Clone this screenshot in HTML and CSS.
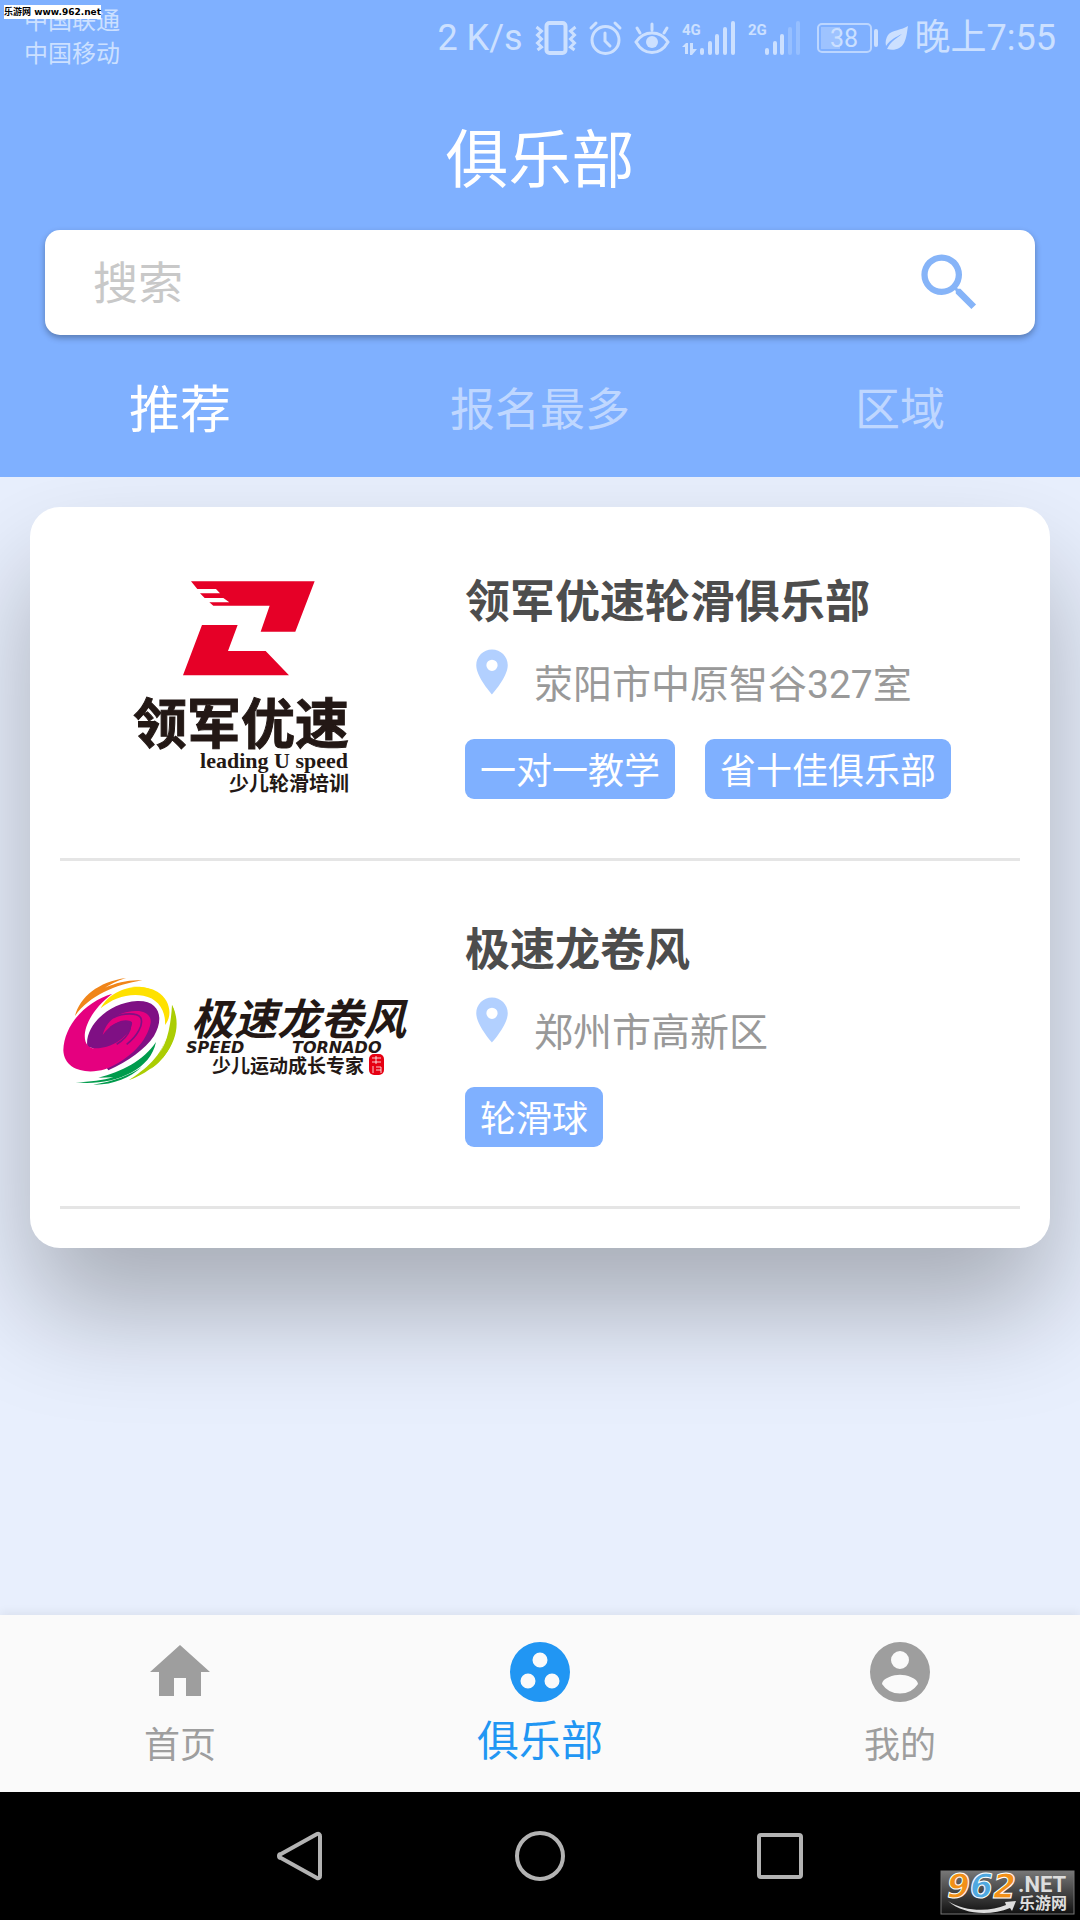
FILE: index.html
```html
<!DOCTYPE html>
<html lang="zh-CN">
<head>
  <meta charset="UTF-8">
  <meta name="viewport" content="width=device-width, initial-scale=1.0">
  <title>俱乐部</title>
  <link rel="stylesheet" href="styles.css">
</head>
<body>

<div class="site-mark">乐游网 www.962.net</div>

<header class="header">
  <div class="status-bar">
    <div class="carriers">
      <div>中国联通</div>
      <div>中国移动</div>
    </div>
    <div class="status-icons">
      <span>2 K/s</span>
      <!-- vibrate -->
      <svg width="42" height="34" viewBox="0 0 42 34" fill="none" stroke="currentColor">
        <rect x="11.500" y="2" width="19" height="30" rx="3" stroke-width="4"/>
        <path d="M1.500 6l5 4-4 4 4 4-4 4 4 4-4 3M40.500 6l-5 4 4 4-4 4 4 4-4 4 4 3" stroke-width="3"/>
      </svg>
      <!-- alarm -->
      <svg width="33" height="34" viewBox="0 0 33 34" fill="none" stroke="currentColor" stroke-width="3" stroke-linecap="round">
        <circle cx="16.500" cy="19" r="13.500"/>
        <path d="M16 12v8l5 5M2 7l5-5M31 7l-5-5"/>
      </svg>
      <!-- eye -->
      <svg width="36" height="34" viewBox="0 0 36 34" fill="none" stroke="currentColor" stroke-width="3" stroke-linecap="round">
        <path d="M2 21C10 9 26 9 34 21C26 35 10 35 2 21zM18 9V3M6 12L3 7M30 12l3-5"/>
        <circle cx="18" cy="21" r="6" fill="currentColor" stroke="none"/>
      </svg>
      <!-- signal, sim 1 -->
      <svg width="54" height="34" viewBox="0 0 54 34" fill="currentColor">
        <text class="net" x="0" y="14">4G</text>
        <path d="M0 26l4-4h2v11H3v-7zM8 22h3v6h4l-5 6H8z"/>
        <rect x="18" y="27" width="4" height="7" rx="2"/>
        <rect x="26" y="20" width="4" height="14" rx="2"/>
        <rect x="33" y="13" width="4" height="21" rx="2"/>
        <rect x="41" y="6" width="4" height="28" rx="2"/>
        <rect x="49" y="0" width="4" height="34" rx="2"/>
      </svg>
      <!-- signal, sim 2 -->
      <svg width="54" height="34" viewBox="0 0 54 34" fill="currentColor">
        <text class="net" x="0" y="14">2G</text>
        <rect x="17" y="27" width="4" height="7" rx="2"/>
        <rect x="25" y="20" width="4" height="14" rx="2"/>
        <rect x="32" y="13" width="4" height="21" rx="2"/>
        <rect x="40" y="6" width="4" height="28" rx="2" opacity=".3"/>
        <rect x="48" y="0" width="4" height="34" rx="2" opacity=".3"/>
      </svg>
      <div class="power">
        <svg width="62" height="30" viewBox="0 0 62 30" fill="currentColor">
          <rect x="1" y="1" width="53" height="28" rx="4" fill="none" stroke="currentColor" stroke-width="2" opacity=".8"/>
          <rect x="4" y="4" width="19" height="22" opacity=".4"/>
          <rect x="57" y="6" width="4" height="18" rx="2"/>
          <text class="level" x="27" y="24" text-anchor="middle">38</text>
        </svg>
        <!-- leaf -->
        <svg width="24" height="24" viewBox="0 0 24 24" fill="currentColor">
          <path d="M23 0C17 4 7 4 3 9C1 12 0 16 1 20C6 13 11 11 17 8C12 12 6 15 2 23C9 25 16 23 19 17C22 11 22 5 23 0z"/>
        </svg>
        <span>晚上7:55</span>
      </div>
    </div>
  </div>

  <h1 class="title">俱乐部</h1>

  <form class="search">
    <input class="search-input" type="text" placeholder="搜索" aria-label="搜索">
    <button class="search-button" type="button" aria-label="搜索">
      <svg width="75" height="75" viewBox="0 0 24 24" fill="currentColor">
        <path d="M15.500 14h-.79l-.28-.27A6.471 6.471 0 0 0 16 9.500 6.500 6.500 0 1 0 9.500 16c1.610 0 3.090-.59 4.230-1.570l.27.28v.79l5 4.990L20.490 19l-4.990-5zm-6 0C7.010 14 5 11.990 5 9.500S7.010 5 9.500 5 14 7.010 14 9.500 11.990 14 9.500 14z"/>
      </svg>
    </button>
  </form>

  <div class="tabs">
    <button class="tab active">推荐</button>
    <button class="tab">报名最多</button>
    <button class="tab">区域</button>
  </div>
</header>

<main class="content">
  <div class="card">
    <article class="club">
      <div class="club-logo">
        <svg width="224" height="224" viewBox="-2 -2 224 224">
          <g fill="#e60027" transform="translate(-20 -15) scale(.3333)">
            <path d="M243 61H614L556 212H452L479 134H310L298 124H358L340 111H284L270 97H330L318 84H262z"/>
            <path d="M276 192H383L354 270H467L537 343H219z"/>
          </g>
          <g fill="#231815">
            <text class="logo-name" x="3" y="168">领军优速</text>
            <text class="logo-latin" x="218" y="192" text-anchor="end">leading U speed</text>
            <text class="logo-sub" x="219" y="215" text-anchor="end">少儿轮滑培训</text>
          </g>
        </svg>
      </div>
      <div class="club-info">
        <h2 class="club-name">领军优速轮滑俱乐部</h2>
        <div class="place">
          <svg class="pin" width="54" height="54" viewBox="0 0 24 24" fill="currentColor">
            <path d="M12 2C8.130 2 5 5.130 5 9c0 5.250 7 13 7 13s7-7.750 7-13c0-3.870-3.130-7-7-7zm0 9.500a2.500 2.500 0 1 1 0-5 2.500 2.500 0 0 1 0 5z"/>
          </svg>
          <span class="address">荥阳市中原智谷327室</span>
        </div>
        <div class="tags">
          <span class="tag">一对一教学</span>
          <span class="tag">省十佳俱乐部</span>
        </div>
      </div>
    </article>

    <article class="club">
      <div class="club-logo">
        <svg width="360" height="116" viewBox="0 0 360 116">
          <!-- swirl -->
          <g transform="translate(-10 -15) scale(.3333)">
            <path fill="#f08519" d="M75 165C90 108 145 62 228 51C200 60 180 70 165 80C200 64 240 55 277 58C195 72 120 102 75 165z"/>
            <path fill="#ffe100" d="M152 142C180 85 265 60 322 92C362 116 368 165 345 192C348 150 325 112 280 104C230 97 190 112 152 142z"/>
            <path fill="#ffe100" d="M245 78C300 72 352 98 354 165L348 172C350 120 310 85 245 78z"/>
            <path fill="#abcd03" d="M366 132C405 205 362 310 236 358C285 325 338 285 352 215C345 250 325 290 296 320C340 270 372 210 366 132z"/>
            <path fill="#abcd03" d="M366 132C392 190 372 280 300 325C345 270 362 210 366 132z"/>
            <path fill="#009b4c" d="M77 364C180 375 300 335 318 243C280 300 215 332 145 350L190 349C160 357 120 364 77 364z"/>
            <path fill="#009b4c" d="M130 371C190 372 240 350 275 318C240 342 190 362 130 371z"/>
            <path fill="#7f1084" d="M112 257C103 195 175 125 262 120C332 118 342 175 312 225C285 265 235 300 175 328L130 262z"/>
            <path fill="#e5007f" d="M187 98C110 120 42 190 40 268C42 325 105 342 165 325C240 295 292 240 302 185C305 160 280 148 255 150C205 152 170 178 158 222C190 180 230 170 246 184C250 205 205 262 135 262C85 262 92 170 187 98z"/>
            <path fill="none" stroke="#7f1084" stroke-width="5" d="M190 170C220 155 262 155 272 170C282 190 262 225 230 250M180 200C210 178 245 180 240 205C235 220 225 235 200 250"/>
          </g>
          <g fill="#231815">
            <text class="storm-name" x="131" y="59">极速龙卷风</text>
            <text class="storm-latin" x="126" y="77">SPEED</text>
            <text class="storm-latin" x="232" y="77">TORNADO</text>
            <text class="storm-sub" x="152" y="97">少儿运动成长专家</text>
          </g>
          <rect x="309" y="78" width="15" height="21" rx="5" fill="#e60012"/>
          <path fill="none" stroke="#fff" stroke-width=".8" d="M312 82h9M316 80v8M312 86h9M313 90v7M316 91h5v6M316 94h5"/>
        </svg>
      </div>
      <div class="club-info">
        <h2 class="club-name">极速龙卷风</h2>
        <div class="place">
          <svg class="pin" width="54" height="54" viewBox="0 0 24 24" fill="currentColor">
            <path d="M12 2C8.130 2 5 5.130 5 9c0 5.250 7 13 7 13s7-7.750 7-13c0-3.870-3.130-7-7-7zm0 9.500a2.500 2.500 0 1 1 0-5 2.500 2.500 0 0 1 0 5z"/>
          </svg>
          <span class="address">郑州市高新区</span>
        </div>
        <div class="tags">
          <span class="tag">轮滑球</span>
        </div>
      </div>
    </article>
  </div>
</main>

<nav class="bottom-nav">
  <a class="nav-item" href="#home">
    <svg width="72" height="72" viewBox="0 0 24 24" fill="currentColor">
      <path d="M10 20v-6h4v6h5v-8h3L12 3 2 12h3v8z"/>
    </svg>
    <span>首页</span>
  </a>
  <a class="nav-item active" href="#club">
    <svg width="72" height="72" viewBox="0 0 24 24" fill="currentColor">
      <path d="M12 2a10 10 0 1 0 0 20 10 10 0 0 0 0-20zM8 17.500a2.500 2.500 0 1 1 0-5 2.500 2.500 0 0 1 0 5zM9.500 8a2.500 2.500 0 1 1 5 0 2.500 2.500 0 0 1-5 0zm6.500 9.500a2.500 2.500 0 1 1 0-5 2.500 2.500 0 0 1 0 5z"/>
    </svg>
    <span>俱乐部</span>
  </a>
  <a class="nav-item" href="#mine">
    <svg width="72" height="72" viewBox="0 0 24 24" fill="currentColor">
      <path d="M12 2a10 10 0 1 0 0 20 10 10 0 0 0 0-20zm0 3a3 3 0 1 1 0 6 3 3 0 0 1 0-6zm0 14.200a7.200 7.200 0 0 1-6-3.220c.03-1.990 4-3.080 6-3.080 1.990 0 5.970 1.090 6 3.080a7.200 7.200 0 0 1-6 3.220z"/>
    </svg>
    <span>我的</span>
  </a>
</nav>

<div class="system-nav">
  <button class="system-button" aria-label="返回">
    <svg width="52" height="52" viewBox="0 0 52 52"><path d="M43 4a2 2 0 0 1 3 2V46a2 2 0 0 1-3 2L7 28a2 2 0 0 1 0-4z"/></svg>
  </button>
  <button class="system-button" aria-label="主屏幕">
    <svg width="52" height="52" viewBox="0 0 52 52"><circle cx="26" cy="26" r="23"/></svg>
  </button>
  <button class="system-button" aria-label="最近任务">
    <svg width="52" height="52" viewBox="0 0 52 52"><rect x="5" y="5" width="42" height="42" rx="2"/></svg>
  </button>
  <div class="badge">
    <svg width="135" height="45" viewBox="0 0 135 45">
      <defs>
        <linearGradient id="badge-bg" x1="0" y1="0" x2="0" y2="1">
          <stop offset="0" stop-color="#777"/>
          <stop offset="1" stop-color="#111"/>
        </linearGradient>
      </defs>
      <rect x="1" y="1" width="133" height="43" fill="url(#badge-bg)" stroke="#777"/>
      <path fill="#ddd" d="M8 31C25 42 50 42 66 35L65 32L76 31L72 41L70 38C50 46 24 45 8 31z"/>
      <text class="badge-num" x="7" y="28"><tspan fill="#f29018">9</tspan><tspan fill="#4fa8e0">6</tspan><tspan fill="#f29018">2</tspan></text>
      <text class="badge-net" x="78" y="22">.NET</text>
      <text class="badge-cn" x="79" y="39">乐游网</text>
    </svg>
  </div>
</div>

</body>
</html>
```
FILE: styles.css
```css
* {
  box-sizing: border-box;
}
body {
  font-family: Roboto, "Noto Sans CJK SC", sans-serif;
  background-color: #e8effd;
  margin: 0;
  min-height: 100vh;
  display: flex;
  flex-direction: column;
}
svg {
  display: block;
  flex-shrink: 0;
  overflow: visible;
}
button {
  font-family: inherit;
  background: none;
  border: none;
  padding: 0;
  cursor: pointer;
}
.site-mark {
  position: absolute;
  top: 5px;
  left: 4px;
  z-index: 2;
  background-color: white;
  color: black;
  font: bold 9px/14px "DejaVu Sans", "Noto Sans CJK SC", sans-serif;
  white-space: nowrap;
}

/* Header */
.header {
  position: relative;
  z-index: 1;
  background-color: #7fb0ff;
  padding-bottom: 36px;
}
.status-bar {
  display: flex;
  justify-content: space-between;
  align-items: flex-start;
  padding: 5px 24px 0;
  color: #cce0ff;
}
.carriers {
  font-size: 24px;
  line-height: 33px;
}
.status-icons {
  display: flex;
  align-items: center;
  gap: 12px;
  font-size: 36px;
  line-height: 66px;
}
.power {
  display: flex;
  align-items: center;
  gap: 6px;
  margin-left: 3px;
}
.net {
  font-size: 15px;
  font-weight: bold;
}
.level {
  font-size: 25px;
}
.title {
  margin: 51px 0 30px;
  color: white;
  font-size: 63px;
  font-weight: normal;
  line-height: 78px;
  text-align: center;
}
.search {
  display: flex;
  align-items: center;
  justify-content: space-between;
  height: 105px;
  margin: 0 45px;
  padding: 0 48px;
  background-color: white;
  border-radius: 15px;
  box-shadow: 0 3px 6px rgba(0, 0, 0, 0.3);
}
.search-input {
  flex: 1;
  min-width: 0;
  border: none;
  outline: none;
  padding: 4px 0 0;
  background: none;
  font-family: inherit;
  font-size: 45px;
  line-height: 60px;
}
.search-input::placeholder {
  color: #c8c8c8;
}
.search-button {
  color: #86b4f8;
}
.tabs {
  display: flex;
  align-items: center;
  margin-top: 46px;
}
.tab {
  flex: 1;
  color: #bfd7ff;
  font-size: 45px;
  line-height: 60px;
}
.tab.active {
  color: white;
  font-size: 51px;
}

/* Club list */
.content {
  flex: 1;
  padding: 30px;
}
.card {
  padding: 6px 30px 39px;
  background-color: white;
  border-radius: 30px;
  box-shadow: 0 62px 108px rgba(0, 0, 0, 0.28);
}
.club {
  display: flex;
  gap: 45px;
  padding: 60px 0 59px;
  border-bottom: 3px solid #e5e5e5;
}
.club-logo {
  flex: 0 0 360px;
  display: flex;
  align-items: center;
  justify-content: center;
}
.club-name {
  margin: 0 0 12px;
  color: #4d4d4d;
  font-size: 45px;
  line-height: 60px;
}
.place {
  display: flex;
  gap: 15px;
}
.pin {
  color: #b2d0ff;
}
.address {
  padding-top: 16px;
  color: #999;
  font-size: 39px;
  line-height: 48px;
}
.tags {
  display: flex;
  gap: 30px;
  margin-top: 30px;
}
.tag {
  padding: 6px 15px 0;
  background-color: #7fb0ff;
  border-radius: 9px;
  color: white;
  font-size: 36px;
  line-height: 54px;
}

/* Logos */
.logo-name {
  font-size: 54px;
  font-weight: bold;
  stroke: #231815;
  stroke-width: 1px;
}
.logo-latin {
  font-family: "Liberation Serif", serif;
  font-size: 22px;
  font-weight: bold;
}
.logo-sub {
  font-size: 20px;
  font-weight: bold;
}
.storm-name {
  font-size: 43px;
  font-style: italic;
  font-weight: bold;
}
.storm-latin {
  font-family: "DejaVu Sans", sans-serif;
  font-size: 16px;
  font-style: italic;
  font-weight: bold;
}
.storm-sub {
  font-size: 19px;
  font-weight: bold;
}

/* Bottom navigation */
.bottom-nav {
  display: flex;
  height: 177px;
  background-color: #fafafa;
  box-shadow: 0 -3px 9px rgba(0, 0, 0, 0.06);
}
.nav-item {
  flex: 1;
  display: flex;
  flex-direction: column;
  align-items: center;
  padding-top: 21px;
  color: #9e9e9e;
  font-size: 36px;
  line-height: 76px;
  text-decoration: none;
}
.nav-item.active {
  color: #2196f3;
  font-size: 42px;
  line-height: 68px;
}
.system-nav {
  position: relative;
  display: flex;
  align-items: center;
  justify-content: center;
  gap: 188px;
  height: 128px;
  background-color: black;
}
.system-button svg {
  fill: none;
  stroke: #b3b3b3;
  stroke-width: 4px;
}
.badge {
  position: absolute;
  right: 5px;
  bottom: 5px;
}
.badge-num {
  font-family: "DejaVu Sans", sans-serif;
  font-size: 33px;
  font-style: italic;
  font-weight: bold;
  stroke: white;
  stroke-width: 1px;
}
.badge-net {
  fill: #ddd;
  font-size: 22px;
  font-weight: bold;
}
.badge-cn {
  fill: #ddd;
  font-size: 16px;
  font-weight: bold;
}
```
